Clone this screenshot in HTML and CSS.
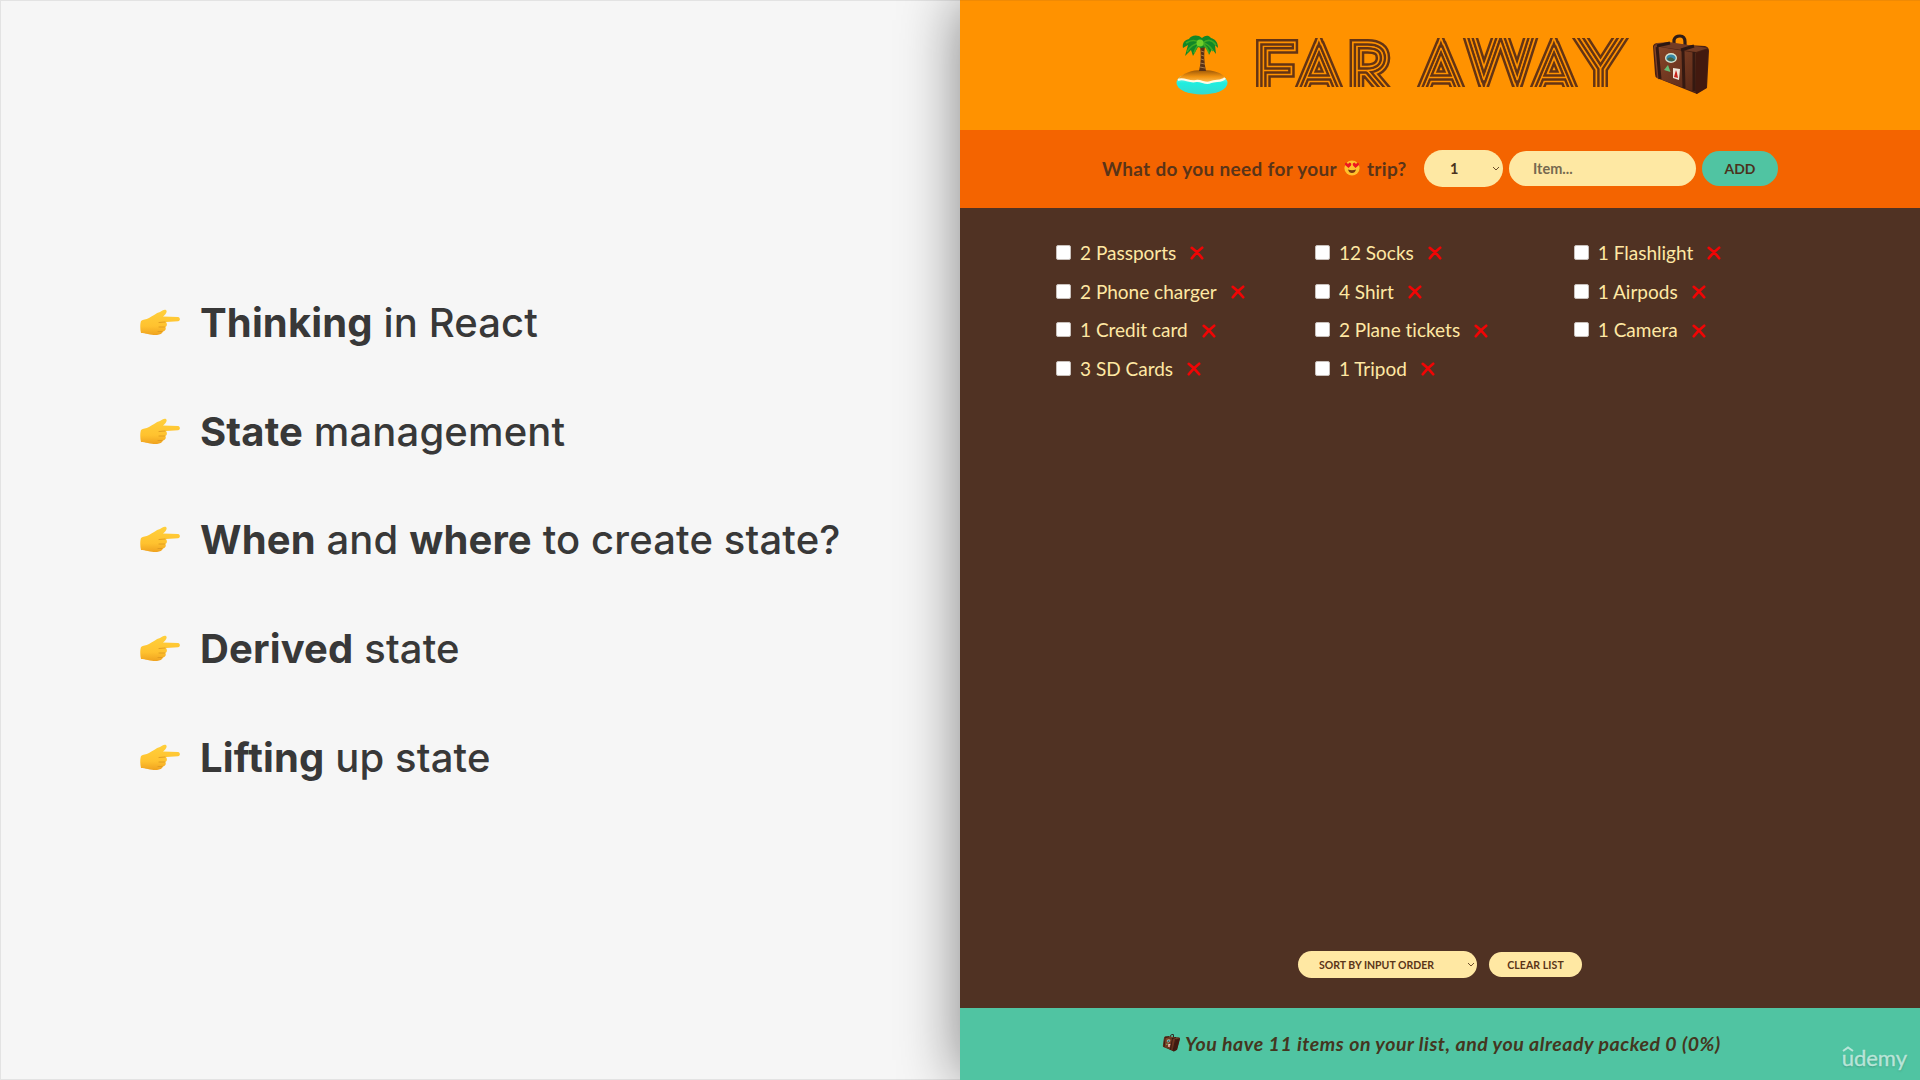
FILE: index.html
```html
<!DOCTYPE html>
<html lang="en">
<head>
<meta charset="utf-8">
<title>Far Away</title>
<link rel="stylesheet" href="styles.css">
</head>
<body>
<svg class="symbols" aria-hidden="true">
  <defs>
    <linearGradient id="skin" x1="0" y1="0" x2="0" y2="1"><stop offset="0" stop-color="#ffd03c"/><stop offset=".65" stop-color="#ffc22f"/><stop offset="1" stop-color="#efa21f"/></linearGradient>
    <linearGradient id="sea" x1="0" y1="0" x2="0" y2="1"><stop offset="0" stop-color="#e8fff0"/><stop offset=".5" stop-color="#1feee0"/><stop offset="1" stop-color="#35d9cf"/></linearGradient>
    <linearGradient id="sand" x1="0" y1="0" x2="0" y2="1"><stop offset="0" stop-color="#9b5708"/><stop offset=".5" stop-color="#ee9111"/><stop offset="1" stop-color="#ffc35a"/></linearGradient>
    <linearGradient id="leather" x1="0" y1="0" x2="1" y2="1"><stop offset="0" stop-color="#8a482a"/><stop offset="1" stop-color="#582817"/></linearGradient>
    <symbol id="hand" viewBox="0 0 40 27">
      <path d="M1 12C3 10 6 11 9 9C13 7 16 4 20 3C22 2 24 0 26 1C28 3 25 6 23 7.500L38 8C40.500 8.500 40.500 12 38 12.300L26 13C27.500 15 27 17 25.500 18C26.500 21 24.500 22 23 22.500C22 25 20 25.500 17 26C12 26.500 5 24 1 24C0 20 0 15 1 12Z" fill="url(#skin)"/>
      <path d="M25 13L19 13.500M24.500 18L19 18M22 22.500L18 22.500" fill="none" stroke="#df9a20" stroke-width=".9" stroke-linecap="round"/>
    </symbol>
    <symbol id="bag" viewBox="0 0 58 62">
      <path d="M22 12V6Q23 2 28 2Q33 2 33 8V13" fill="none" stroke="#2f1d18" stroke-width="3.2"/>
      <path d="M1 12Q2 9 6 9L18 10L53 12Q57 13 57 17L55 54L45 60L5 44Q3 43 3 40Z" fill="#492013"/>
      <path d="M2 12L44 19L43 58L5 44Z" fill="url(#leather)"/>
      <path d="M44 19L56 15L54 54L44 60Z" fill="#42190f"/>
      <path d="M5 9L17 8L56 14L44 18L2 12Z" fill="#743c24"/>
      <path d="M5 13L8 45M31 17L32 54M42 18L42 57" stroke="#351911" stroke-width="3"/>
      <path d="M5 12L18 9M29 16L42 12" stroke="#2d1712" stroke-width="3"/>
      <ellipse cx="19" cy="24" rx="6" ry="5" fill="#d8e4cc"/><ellipse cx="19" cy="24" rx="4.7" ry="3.6" fill="#3687a6"/><path d="M15 25Q19 21 23 26Q19 29 15 25" fill="#426343"/>
      <path d="M16 31L18.500 38L12 36Z" fill="#68bd74"/><path d="M21 34L28 35L27 46L21 44Z" fill="#eee4d6"/><path d="M24 36L25 39L26 44L22 43Z" fill="#c8251c"/>
    </symbol>
    <symbol id="cross" viewBox="0 0 14 14"><path d="M1.8 1.8C5 4 9 8 12.2 12.2M12.2 1.8C8 5 5 8 1.8 12.2" fill="none" stroke="#f00505" stroke-width="2.7" stroke-linecap="round"/></symbol>
    <symbol id="chevron" viewBox="0 0 8 5"><path d="M1 1L4 4L7 1" fill="none" stroke="#6b4c2b" stroke-width="1"/></symbol>
  </defs>
</svg>
<main class="slide">
  <section class="topics">
    <ul class="topic-list">
      <li><svg class="hand"><use href="#hand"/></svg><span><b>Thinking</b> in React</span></li>
      <li><svg class="hand"><use href="#hand"/></svg><span><b>State</b> management</span></li>
      <li><svg class="hand"><use href="#hand"/></svg><span><b>When</b> and <b>where</b> to create state?</span></li>
      <li><svg class="hand"><use href="#hand"/></svg><span><b>Derived</b> state</span></li>
      <li><svg class="hand"><use href="#hand"/></svg><span><b>Lifting</b> up state</span></li>
    </ul>
  </section>
  <section class="app">
    <header class="banner">
      <svg class="island" viewBox="0 0 52 60">
        <ellipse cx="26" cy="48" rx="25.500" ry="11.500" fill="url(#sea)"/>
        <path d="M2 45C6 38 16 35 26 35C38 35 47 38 49 43C46 47 40 45 35 47C29 50 26 45 20 46C13 48 8 43 2 45Z" fill="url(#sand)"/>
        <path d="M2 45C8 42 13 48 20 46C26 45 29 50 35 47C40 45 46 47 49 43" fill="none" stroke="#fffbe6" stroke-width="2.200"/>
        <path d="M24 11L29 11Q27 23 30 36H23Q26 24 24 11Z" fill="#5b3217"/>
        <path d="M25 16L28 17M25 20L28 21M25 24L28 25M24 28L29 29M24 32L29 33" stroke="#a87845"/>
        <path d="M26 3C22 -1 15 0 13 4C8 5 6 9 7 13L12 10L9 21L15 15L17 21L22 12L25 13L31 12L33 20L36 14L40 19L39 10L42 13C42 7 39 4 35 3C32 -1 28 1 26 3Z" fill="#128727"/>
        <path d="M24 8Q18 3 10 8M24 8Q15 9 11 17M25 8Q20 11 18 18M27 8Q34 2 40 10M27 8Q33 9 37 16M26 8Q31 12 33 18" fill="none" stroke="#3fa822" stroke-width="1.700"/>
        <circle cx="24" cy="8" r="3.500" fill="#70cf29"/>
      </svg>
      <svg class="wordmark" viewBox="0 0 376 49" role="img">
        <text id="name" y="56"><tspan x="0">F</tspan><tspan class="narrow" x="43">A</tspan><tspan class="blunt" x="93.500">R</tspan> <tspan class="narrow" x="165">A</tspan><tspan class="wide" x="211" y="42">W</tspan><tspan class="narrow" x="278" y="56">A</tspan><tspan class="tall" x="321">Y</tspan></text>
        <use class="line-a" href="#name"/><use class="line-b" href="#name"/><use class="line-c" href="#name"/><use class="line-d" href="#name"/>
      </svg>
      <svg class="luggage"><use href="#bag"/></svg>
    </header>
    <form class="add-form">
      <h3>What do you need for your
        <svg class="face" viewBox="0 0 16 16"><circle cx="8" cy="8" r="7.600" fill="#ffc22c"/><path d="M4.500 8L1 5Q.5 2.500 2.500 2.500L4 4L5.500 2.500Q8 3 7 5.500ZM11.500 8L9 5.500Q8 3 10.500 2.500L12 4L13.500 2.500Q15.500 3 15 5Z" fill="#ed1720"/><path d="M4 9.500Q8 11 12 9.500Q11 13 8 13Q5 13 4 9.500" fill="#793711"/></svg>
        trip?</h3>
      <div class="field quantity"><span>1</span><svg class="chevron"><use href="#chevron"/></svg></div>
      <div class="field item-name">Item...</div>
      <div class="field add">ADD</div>
    </form>
    <div class="packing">
      <ul class="items">
        <li><i></i><span>2 Passports</span><svg><use href="#cross"/></svg></li>
        <li><i></i><span>12 Socks</span><svg><use href="#cross"/></svg></li>
        <li><i></i><span>1 Flashlight</span><svg><use href="#cross"/></svg></li>
        <li><i></i><span>2 Phone charger</span><svg><use href="#cross"/></svg></li>
        <li><i></i><span>4 Shirt</span><svg><use href="#cross"/></svg></li>
        <li><i></i><span>1 Airpods</span><svg><use href="#cross"/></svg></li>
        <li><i></i><span>1 Credit card</span><svg><use href="#cross"/></svg></li>
        <li><i></i><span>2 Plane tickets</span><svg><use href="#cross"/></svg></li>
        <li><i></i><span>1 Camera</span><svg><use href="#cross"/></svg></li>
        <li><i></i><span>3 SD Cards</span><svg><use href="#cross"/></svg></li>
        <li><i></i><span>1 Tripod</span><svg><use href="#cross"/></svg></li>
      </ul>
      <div class="actions">
        <div class="action sort"><span>SORT BY INPUT ORDER</span><svg class="chevron"><use href="#chevron"/></svg></div>
        <div class="action clear">CLEAR LIST</div>
      </div>
    </div>
    <footer class="stats">
      <svg class="mini-bag"><use href="#bag"/></svg>
      <em>You have 11 items on your list, and you already packed 0 (0%)</em>
    </footer>
    <div class="watermark">udemy<svg viewBox="0 0 12 6"><path d="M1 5L6 1.500L11 5" fill="none" stroke="currentColor" stroke-width="2"/></svg></div>
  </section>
</main>
</body>
</html>
```
FILE: styles.css
```css
* { box-sizing: border-box; }
body { margin: 0; background: #f6f6f6; }
ul { list-style: none; margin: 0; padding: 0; }
svg { display: block; flex: none; }
.symbols { position: absolute; width: 0; height: 0; }
.slide { display: grid; grid-template-columns: 960px 960px; height: 1080px; overflow: hidden; }
.topics { border: solid #e3e3e3; border-width: 1px 0 1px 1px; padding: 268px 0 0 139px; font: 500 40px/108.7px Inter, sans-serif; letter-spacing: .14px; color: #383838; }
.topic-list li { display: flex; align-items: center; gap: 20px; height: 108.7px; white-space: nowrap; }
.topic-list b { font-weight: 700; }
.hand { width: 40px; height: 27px; margin-top: -2px; }
.app { position: relative; display: grid; grid-template-rows: 130px 78px 800px 72px; font-family: Lato, sans-serif; color: #5a3418; box-shadow: 0 0 56px rgba(0,0,0,.48); }
.banner { display: flex; align-items: flex-start; background: #ff9200; padding: 34px 0 0 216px; border-top: 1px solid #f08a04; }
.island { width: 52px; height: 60px; }
.wordmark { width: 376px; height: 49px; margin: 3px 0 0 27px; overflow: hidden; font-family: Lato, sans-serif; font-size: 69px; font-weight: 100; fill: #ff9200; stroke-linejoin: miter; stroke-miterlimit: 8; }
.narrow { font-size: 66px; }
.wide { font-size: 69px; }
.tall { font-size: 86px; }
.blunt { stroke-miterlimit: 1.5; }
.line-a { stroke: #643414; stroke-width: 13.9px; }
.line-b { stroke: #ff9200; stroke-width: 8.9px; }
.line-c { stroke: #643414; stroke-width: 5.6px; }
.line-d { stroke: #ff9200; stroke-width: .7px; }
.luggage { width: 58px; height: 62px; margin-left: 21px; margin-top: -1px; }
.add-form { display: flex; align-items: center; background: #f46400; padding: 0 0 1px 142px; }
.add-form h3 { display: flex; align-items: center; gap: 7px; width: 322px; margin: 0; padding-bottom: 1px; font-size: 19px; font-weight: 700; letter-spacing: .33px; white-space: nowrap; }
.face { width: 16px; height: 16px; }
.field { display: flex; align-items: center; height: 35px; border-radius: 18px; background: #fee8a3; color: #4b321d; font-size: 14.5px; font-weight: 700; }
.quantity { width: 79px; height: 37px; border-radius: 19px; padding: 0 3px 0 26px; justify-content: space-between; }
.chevron { width: 8px; height: 5px; }
.item-name { width: 187px; margin-left: 6px; padding-left: 24px; color: #76694f; }
.add { width: 76px; margin-left: 6px; justify-content: center; background: #50c4a2; font-size: 14px; }
.packing { display: flex; flex-direction: column; justify-content: space-between; background: #503223; padding: 25px 0 30px 96px; }
.items { display: grid; grid-template-columns: repeat(3, 258.9px); grid-auto-rows: 38.7px; color: #ffe8a3; font-size: 19px; font-variant-ligatures: none; }
.items li { display: flex; align-items: center; white-space: nowrap; }
.items i { width: 15px; height: 15px; background: #fff; border: 1px solid #c8c0bb; border-radius: 2px; margin-right: 9px; }
.items svg { width: 14px; height: 14px; margin: 2px 0 0 14px; }
.actions { display: flex; align-items: center; gap: 12px; margin-left: 242px; font-size: 10.5px; font-weight: 700; }
.action { display: flex; align-items: center; height: 25px; border-radius: 13px; background: #ffe8a3; }
.sort { width: 179px; height: 27px; border-radius: 14px; padding: 0 2px 0 21px; justify-content: space-between; }
.clear { width: 93px; justify-content: center; letter-spacing: .1px; }
.stats { display: flex; align-items: center; gap: 5px; background: #50c4a2; padding: 0 0 2px 202px; color: #443620; font-size: 19.5px; font-weight: 700; letter-spacing: .54px; }
.stats em { white-space: nowrap; }
.mini-bag { width: 18px; height: 18px; transform: skewX(-12deg); }
.watermark { position: absolute; right: 13px; bottom: 9px; font-size: 22px; line-height: 26px; color: #b8e5d8; text-shadow: 0 1px 2px #3f947c; -webkit-text-stroke: .4px #b8e5d8; }
.watermark svg { position: absolute; left: 0; top: 1px; width: 12px; height: 6px; }
```
